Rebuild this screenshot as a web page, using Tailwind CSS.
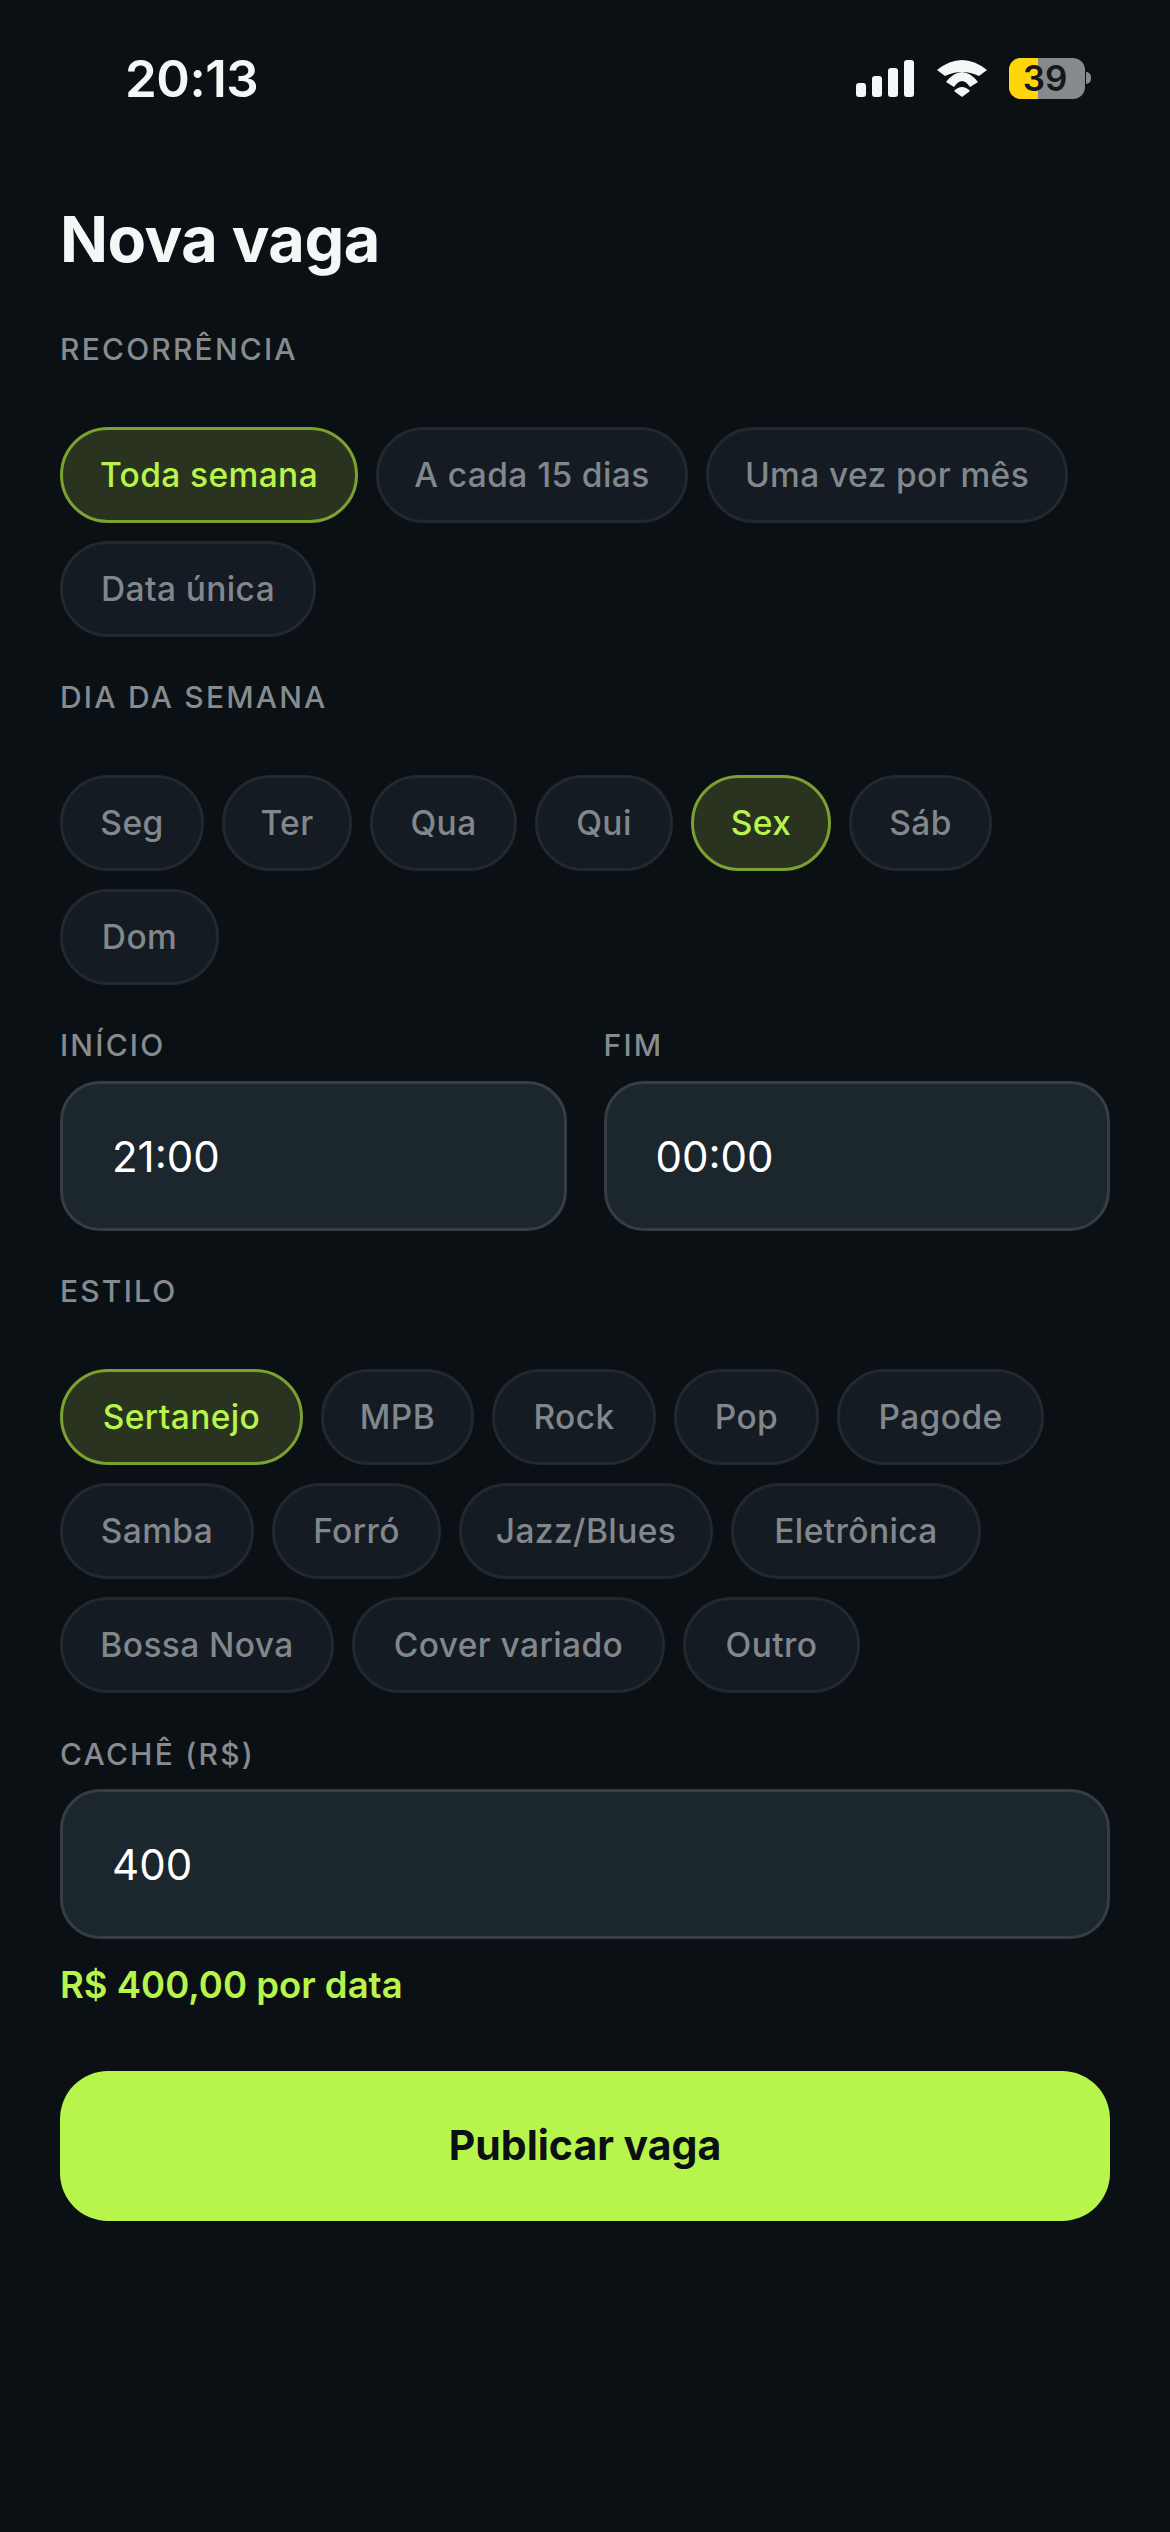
<!DOCTYPE html>
<html lang="pt-BR">
<head>
  <meta charset="UTF-8" />
  <meta name="viewport" content="width=device-width, initial-scale=1.0" />
  <title>Nova vaga</title>
  <script src="https://cdn.jsdelivr.net/npm/@tailwindcss/browser@4"></script>
</head>
<body class="bg-[#0b1014] font-['Inter',sans-serif] text-[#f5f7f7]">
  <div class="w-[1170px] h-[2532px] overflow-hidden">
    <!-- status bar -->
    <div class="h-[156px] flex items-center justify-between pl-[125px] pr-[79px]">
      <span class="text-[51px] font-semibold leading-none tracking-[-0.5px]">20:13</span>
      <div class="flex items-center">
        <svg width="58" height="37" viewBox="0 0 58 37" fill="#f5f7f7" class="mr-[23px]">
          <rect x="0" y="23" width="10" height="14" rx="3" />
          <rect x="16" y="16" width="10" height="21" rx="3" />
          <rect x="32" y="8" width="10" height="29" rx="3" />
          <rect x="48" y="0" width="10" height="37" rx="3" />
        </svg>
        <svg width="50" height="37" viewBox="0 0 50 37" fill="#f5f7f7" class="mr-[22px]">
          <path d="M0 10Q25-10 50 10L42 16Q25 8 8 16Z" />
          <path d="M9 22Q25 2 41 22L33 27Q25 15 17 27Z" />
          <path d="M17 31Q25 23 33 31L25 37Z" />
        </svg>
        <div class="relative w-[76px] h-[41px] rounded-[12px] overflow-hidden bg-[#88898b] flex">
          <div class="w-[29px] h-full bg-[#ffd60a]"></div>
          <span class="absolute inset-0 pr-[4px] flex items-center justify-center text-[35px] font-semibold leading-none text-[#14181b]">39</span>
        </div>
        <div class="w-[5px] h-[12px] ml-[1px] rounded-r-full bg-[#88898b]"></div>
      </div>
    </div>

    <main class="px-[60px]">
      <h1 class="mt-[47px] text-[63px] leading-[72px] font-bold tracking-[-0.5px]">Nova vaga</h1>

      <p class="mt-[57px] h-[34px] leading-[34px] text-[30px] font-medium tracking-[2.2px] text-[#868b8f]">RECORRÊNCIA</p>
      <div class="mt-[61px] flex flex-wrap gap-[18px]">
        <span class="w-[298px] h-[96px] flex items-center justify-center rounded-full border-[3px] border-[#7aa230] bg-[#2a331f] text-[33.5px] tracking-[0.4px] font-medium text-[#b8f54c]">Toda semana</span>
        <span class="w-[312px] h-[96px] flex items-center justify-center rounded-full border-[3px] border-[#22282f] bg-[#141b22] text-[33.5px] tracking-[0.4px] font-medium text-[#82878c]">A cada 15 dias</span>
        <span class="w-[362px] h-[96px] flex items-center justify-center rounded-full border-[3px] border-[#22282f] bg-[#141b22] text-[33.5px] tracking-[0.4px] font-medium text-[#82878c]">Uma vez por mês</span>
        <span class="w-[256px] h-[96px] flex items-center justify-center rounded-full border-[3px] border-[#22282f] bg-[#141b22] text-[33.5px] tracking-[0.4px] font-medium text-[#82878c]">Data única</span>
      </div>

      <p class="mt-[43px] h-[34px] leading-[34px] text-[30px] font-medium tracking-[2.2px] text-[#868b8f]">DIA DA SEMANA</p>
      <div class="mt-[61px] flex flex-wrap gap-[18px]">
        <span class="w-[144px] h-[96px] flex items-center justify-center rounded-full border-[3px] border-[#22282f] bg-[#141b22] text-[33.5px] tracking-[0.4px] font-medium text-[#82878c]">Seg</span>
        <span class="w-[130px] h-[96px] flex items-center justify-center rounded-full border-[3px] border-[#22282f] bg-[#141b22] text-[33.5px] tracking-[0.4px] font-medium text-[#82878c]">Ter</span>
        <span class="w-[147px] h-[96px] flex items-center justify-center rounded-full border-[3px] border-[#22282f] bg-[#141b22] text-[33.5px] tracking-[0.4px] font-medium text-[#82878c]">Qua</span>
        <span class="w-[138px] h-[96px] flex items-center justify-center rounded-full border-[3px] border-[#22282f] bg-[#141b22] text-[33.5px] tracking-[0.4px] font-medium text-[#82878c]">Qui</span>
        <span class="w-[140px] h-[96px] flex items-center justify-center rounded-full border-[3px] border-[#7aa230] bg-[#2a331f] text-[33.5px] tracking-[0.4px] font-medium text-[#b8f54c]">Sex</span>
        <span class="w-[143px] h-[96px] flex items-center justify-center rounded-full border-[3px] border-[#22282f] bg-[#141b22] text-[33.5px] tracking-[0.4px] font-medium text-[#82878c]">Sáb</span>
        <span class="w-[159px] h-[96px] flex items-center justify-center rounded-full border-[3px] border-[#22282f] bg-[#141b22] text-[33.5px] tracking-[0.4px] font-medium text-[#82878c]">Dom</span>
      </div>

      <div class="mt-[43px] grid grid-cols-2 gap-x-[37px]">
        <div>
          <p class="h-[34px] leading-[34px] text-[30px] font-medium tracking-[2.2px] text-[#868b8f]">INÍCIO</p>
          <div class="mt-[19px] h-[150px] pl-[49px] flex items-center rounded-[40px] border-[3px] border-[#363d44] bg-[#1c262d] text-[42px] text-white">21:00</div>
        </div>
        <div>
          <p class="h-[34px] leading-[34px] text-[30px] font-medium tracking-[2.2px] text-[#868b8f]">FIM</p>
          <div class="mt-[19px] h-[150px] pl-[49px] flex items-center rounded-[40px] border-[3px] border-[#363d44] bg-[#1c262d] text-[42px] text-white">00:00</div>
        </div>
      </div>

      <p class="mt-[43px] h-[34px] leading-[34px] text-[30px] font-medium tracking-[2.2px] text-[#868b8f]">ESTILO</p>
      <div class="mt-[61px] flex flex-wrap gap-[18px]">
        <span class="w-[243px] h-[96px] flex items-center justify-center rounded-full border-[3px] border-[#7aa230] bg-[#2a331f] text-[33.5px] tracking-[0.4px] font-medium text-[#b8f54c]">Sertanejo</span>
        <span class="w-[153px] h-[96px] flex items-center justify-center rounded-full border-[3px] border-[#22282f] bg-[#141b22] text-[33.5px] tracking-[0.4px] font-medium text-[#82878c]">MPB</span>
        <span class="w-[164px] h-[96px] flex items-center justify-center rounded-full border-[3px] border-[#22282f] bg-[#141b22] text-[33.5px] tracking-[0.4px] font-medium text-[#82878c]">Rock</span>
        <span class="w-[145px] h-[96px] flex items-center justify-center rounded-full border-[3px] border-[#22282f] bg-[#141b22] text-[33.5px] tracking-[0.4px] font-medium text-[#82878c]">Pop</span>
        <span class="w-[207px] h-[96px] flex items-center justify-center rounded-full border-[3px] border-[#22282f] bg-[#141b22] text-[33.5px] tracking-[0.4px] font-medium text-[#82878c]">Pagode</span>
        <span class="w-[194px] h-[96px] flex items-center justify-center rounded-full border-[3px] border-[#22282f] bg-[#141b22] text-[33.5px] tracking-[0.4px] font-medium text-[#82878c]">Samba</span>
        <span class="w-[169px] h-[96px] flex items-center justify-center rounded-full border-[3px] border-[#22282f] bg-[#141b22] text-[33.5px] tracking-[0.4px] font-medium text-[#82878c]">Forró</span>
        <span class="w-[254px] h-[96px] flex items-center justify-center rounded-full border-[3px] border-[#22282f] bg-[#141b22] text-[33.5px] tracking-[0.4px] font-medium text-[#82878c]">Jazz/Blues</span>
        <span class="w-[250px] h-[96px] flex items-center justify-center rounded-full border-[3px] border-[#22282f] bg-[#141b22] text-[33.5px] tracking-[0.4px] font-medium text-[#82878c]">Eletrônica</span>
        <span class="w-[274px] h-[96px] flex items-center justify-center rounded-full border-[3px] border-[#22282f] bg-[#141b22] text-[33.5px] tracking-[0.4px] font-medium text-[#82878c]">Bossa Nova</span>
        <span class="w-[313px] h-[96px] flex items-center justify-center rounded-full border-[3px] border-[#22282f] bg-[#141b22] text-[33.5px] tracking-[0.4px] font-medium text-[#82878c]">Cover variado</span>
        <span class="w-[177px] h-[96px] flex items-center justify-center rounded-full border-[3px] border-[#22282f] bg-[#141b22] text-[33.5px] tracking-[0.4px] font-medium text-[#82878c]">Outro</span>
      </div>

      <p class="mt-[44px] h-[34px] leading-[34px] text-[30px] font-medium tracking-[2.2px] text-[#868b8f]">CACHÊ (R$)</p>
      <div class="mt-[18px] h-[150px] pl-[49px] flex items-center rounded-[40px] border-[3px] border-[#363d44] bg-[#1c262d] text-[42px] text-white">400</div>
      <p class="mt-[26px] h-[40px] leading-[40px] text-[36.5px] font-semibold text-[#b8f54c]">R$ 400,00 por data</p>
      <button class="mt-[66px] w-full h-[150px] rounded-[48px] bg-[#b8f54c] text-[41px] font-bold text-[#0b1014]">Publicar vaga</button>
    </main>
  </div>
</body>
</html>
